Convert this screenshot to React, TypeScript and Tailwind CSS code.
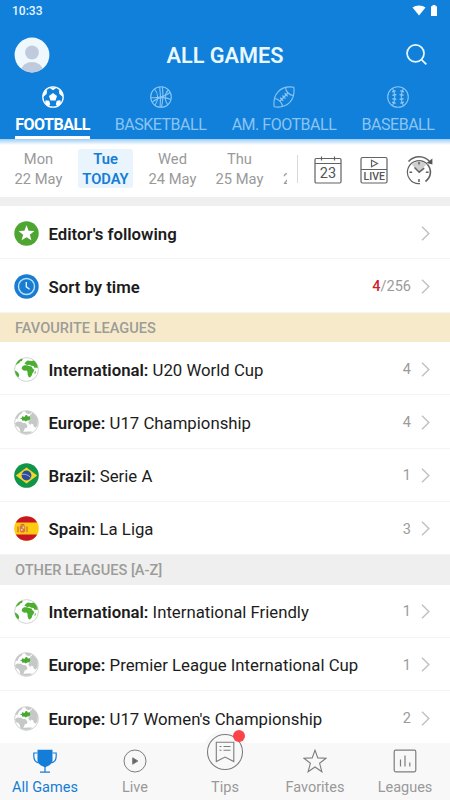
import type { ReactNode } from "react"

type FlagName = "star" | "clock" | "world" | "europe" | "brazil" | "spain"

interface Row {
    flag: FlagName
    bold: string
    text?: string
    count?: string
    live?: string
}

const topRows: Row[] = [
    { flag: "star", bold: "Editor's following" },
    { flag: "clock", bold: "Sort by time", live: "4", count: "/256" },
]

const favouriteRows: Row[] = [
    { flag: "world", bold: "International:", text: "U20 World Cup", count: "4" },
    { flag: "europe", bold: "Europe:", text: "U17 Championship", count: "4" },
    { flag: "brazil", bold: "Brazil:", text: "Serie A", count: "1" },
    { flag: "spain", bold: "Spain:", text: "La Liga", count: "3" },
]

const otherRows: Row[] = [
    { flag: "world", bold: "International:", text: "International Friendly", count: "1" },
    { flag: "europe", bold: "Europe:", text: "Premier League International Cup", count: "1" },
    { flag: "europe", bold: "Europe:", text: "U17 Women's Championship", count: "2" },
]

const days = [
    { day: "Mon", date: "22 May" },
    { day: "Tue", date: "TODAY", active: true },
    { day: "Wed", date: "24 May" },
    { day: "Thu", date: "25 May" },
]

/* ---------- sport icons ---------- */

function SoccerIcon() {
    return (
        <svg viewBox="0 0 22 22" className="size-[22px]" fill="none" stroke="currentColor" strokeWidth="1.3">
            <circle cx="11" cy="11" r="10.2" />
            <g fill="currentColor" stroke="none">
                <path d="M11 7l4 2.900-1.500 4.500h-5L7 9.900z" />
                <path d="M7 1.500h8L11 4.300zM.9 8.600l2.200-4.500 2.100.4-.6 3.500L1.100 11zM21.100 8.600l-2.200-4.500-2.100.4.6 3.500 3.500 3zM3.200 17.500l.3-3.300 3.700.6 1 3.400-1.300 2zM18.800 17.500l-.3-3.300-3.700.6-1 3.400 1.300 2z" />
            </g>
        </svg>
    )
}

function BasketballIcon() {
    return (
        <svg viewBox="0 0 22 22" className="size-[22px]" fill="none" stroke="currentColor" strokeWidth="1.1">
            <circle cx="11" cy="11" r="10.3" />
            <path d="M9.700.8c1 7 1.200 13.500.4 20.400M12.300.8c1 7 .8 13.500-.8 20.400" />
            <path d="M.8 11.500c6 .6 14-.8 19.200-5" />
            <path d="M4.500 3c3.900 4.200 4.200 11 .6 16M18.500 4c-4.500 4-4 10.500-.8 14.800" />
            <path d="M2.500 16c5-4.500 12-5.500 18.300-2.500" />
        </svg>
    )
}

function AmFootballIcon() {
    return (
        <svg viewBox="0 0 22 22" className="size-[22px]" fill="none" stroke="currentColor" strokeWidth="1.1">
            <path d="M20.800 1.200C14 .2 8.500 2 5 5.800 1.700 9.500.3 14.500 1.200 20.800c6.800 1 12.300-.9 15.800-4.600 3.300-3.700 4.700-8.700 3.800-15z" />
            <path d="M12.500 1.200c.3 4.500 3.700 8.200 8.300 8.300M1.200 12.500c4.500.3 8 3.700 8.300 8.300" />
            <path d="M6.800 15.200l8.400-8.400M7.200 11.700l3.100 3.100M9.400 9.500l3.100 3.100M11.600 7.300l3.100 3.100" strokeWidth="1.300" />
        </svg>
    )
}

function BaseballIcon() {
    return (
        <svg viewBox="0 0 22 22" className="size-[22px]" fill="none" stroke="currentColor" strokeWidth="1.1">
            <circle cx="11" cy="11" r="10.3" />
            <path d="M5.500 2.300c3 4.800 3 12.600 0 17.400M16.500 2.300c-3 4.800-3 12.600 0 17.400" />
            <path d="M5 5.900l3.600-1.200M5.400 9.200l4-.6M5.400 12.800l4 .6M5 16.100l3.600 1.200M17 5.900l-3.600-1.200M16.600 9.200l-4-.6M16.600 12.800l-4 .6M17 16.100l-3.600 1.200" strokeWidth="1.500" />
        </svg>
    )
}

const sports = [
    { label: "FOOTBALL", icon: <SoccerIcon />, className: "w-[75px] text-white font-bold", active: true },
    { label: "BASKETBALL", icon: <BasketballIcon />, className: "w-[92px] text-[#8cc5f2]" },
    { label: "AM. FOOTBALL", icon: <AmFootballIcon />, className: "w-[106px] text-[#8cc5f2]" },
    { label: "BASEBALL", icon: <BaseballIcon />, className: "w-[73px] text-[#8cc5f2]" },
]

/* ---------- round row icons ---------- */

function Globe({ europe }: { europe?: boolean }) {
    return (
        <svg viewBox="0 0 25 25" className="size-[25px]">
            <circle cx="12.500" cy="12.500" r="11.900" fill="#fff" stroke="#cccece" strokeWidth=".9" />
            {europe ? (
                <>
                    <g fill="#c6c8c8">
                        <path d="M1.300 8.500C2.500 5 5 2.600 8.300 1.500L8 3.300 5.500 5 4 7.500 3.500 9zM11 1h3.500l3.500 1.200L15.500 4l-3-.5z" />
                        <path d="M1 13l2.500-1.500 3.500.2 2 1.300 2.700.2 1.800 2.500-.5 1.800-2.300 1-1 2.700-1.500 1.800-1.800-1-.7-3-1.500-2.300-2.400-.4z" />
                        <path d="M16 5l2.500-2.200c3 1.800 4.800 4.300 5.400 7.500l-.4 4.700-1.700 2.500-1.800-.6-.8-2.500-1.700-.8-1.200 1.500-2-2 .8-2.300 1.700-1.800z" />
                        <path d="M7 22.300c3.500-1 8-1 11.500-.6-3.600 2.800-8 3-11.500.6z" />
                    </g>
                    <path fill="#47a932" d="M5.800 8.300l1.800-.2.700-1.800 2.200.8 1-1.900 1.600-.3.600 1.500 2.400-.2.500 2.200-1.200 1.900-2.200.1-1.400 1.100-1.500-1.100-2 .3-.4-1.500z" />
                </>
            ) : (
                <g fill="#4bae31">
                    <path d="M2.200 6.600C3.300 4.500 5 2.800 7.300 1.700l1.500.5-1 1.800-1.800.6-.8 1.600-1.500.4-1.200 1.600z" />
                    <path d="M.8 13.400l2 1 1.400 1.400 1 2.200-.7 2.500C2.400 18.800 1 16.300.8 13.400z" />
                    <path d="M10.500 6.800l1.300-2 2-1.200 3.400.3 2.600-.4 2 2 1.500 2.800.4 3-1.700-.8-1.300.4-1.200-1.800-2.300-.4-1.700-.9-2.300.2z" />
                    <path d="M7.700 12l.4-2.200 2-1.500 3-.1 2 .9 2.400.3 1.500 2.700 1.500.7-1.200 2.400-1 1.300-.7 2.300-1.700 1.600-1.300-.3-1.100-3 .1-2-1-1.500-2.600.1z" />
                    <path d="M20.600 15l1-1.200.1 2-1 1.600z" />
                </g>
            )}
        </svg>
    )
}

function RowIcon({ flag }: { flag: FlagName }) {
    if (flag === "world") return <Globe />
    if (flag === "europe") return <Globe europe />
    if (flag === "star") {
        return (
            <svg viewBox="0 0 25 25" className="size-[25px]">
                <circle cx="12.500" cy="12.500" r="12.200" fill="#4fa532" />
                <path fill="#fff" d="M12.500 4.300l2.100 5.400 5.800.3-4.500 3.700 1.500 5.600-4.900-3.100-4.900 3.100 1.500-5.600-4.500-3.700 5.800-.3z" />
            </svg>
        )
    }
    if (flag === "clock") {
        return (
            <svg viewBox="0 0 25 25" className="size-[25px]" fill="none">
                <circle cx="12.500" cy="12.500" r="12.200" fill="#1a7cd0" />
                <circle cx="12.500" cy="12.500" r="8" stroke="#b5e4fb" strokeWidth="1.400" />
                <path d="M12.300 8v4.800l3.300 2.500" stroke="#d9f4ff" strokeWidth="1.400" />
            </svg>
        )
    }
    if (flag === "brazil") {
        return (
            <svg viewBox="0 0 25 25" className="size-[25px]">
                <circle cx="12.500" cy="12.500" r="12.300" fill="#109548" />
                <path fill="#f4d52c" d="M12.500 4.600l10.700 7.900-10.700 7.900-10.700-7.900z" />
                <circle cx="12.500" cy="12.500" r="4.900" fill="#2b4d9b" />
                <path d="M8 11.400c3-.5 6.400.6 8.600 3" stroke="#b9c9dc" strokeWidth=".8" fill="none" />
            </svg>
        )
    }
    return (
        <svg viewBox="0 0 25 25" className="size-[25px]">
            <circle cx="12.500" cy="12.500" r="12.300" fill="#fecb10" />
            <path fill="#c91526" d="M1.800 6.400a12.300 12.300 0 0 1 21.400 0zM1.800 18.600a12.300 12.300 0 0 0 21.400 0z" />
            <path fill="#d9743a" d="M5.800 9.800h5.400v4.700c0 2.700-5.400 2.700-5.400 0z" />
            <path fill="#c96f35" d="M7 8h3l.6 1.400H6.400zM3.400 10.400h1.200v5.800H3.400zM12.400 10.400h1.200v5.800h-1.200z" />
            <path fill="#f0d3bb" d="M8.600 10.600h1.700v1.900H8.600zM6.800 13h1.700v1.700H6.800z" />
        </svg>
    )
}

function Chevron() {
    return (
        <svg viewBox="0 0 9 15" className="h-[15px] w-[9px]" fill="none" stroke="#c2c2c2" strokeWidth="1.500">
            <path d="M1 .8l6.800 6.700L1 14.200" />
        </svg>
    )
}

function LeagueRow({ row }: { row: Row }) {
    return (
        <div className="flex h-[53.250px] shrink-0 items-center border-b border-[#f4f4f4] bg-white pl-3.5 pr-5 pt-[2px]">
            <RowIcon flag={row.flag} />
            <p className="ml-[9.500px] flex-1 whitespace-nowrap pt-0.5 text-[16.750px] text-[#1c1c1c]">
                <span className="font-semibold">{row.bold}</span> {row.text}
            </p>
            <p className="mr-2.5 pt-px text-[14.500px] text-[#9b9b9b]">
                {row.live && <span className="font-medium text-[#cc1f2f]">{row.live}</span>}
                {row.count}
            </p>
            <Chevron />
        </div>
    )
}

function SectionTitle({ title, className }: { title: string; className: string }) {
    return (
        <h2 className={`flex h-[29.500px] shrink-0 items-center pl-[15px] pt-[3px] text-[14.600px] font-medium text-[#9c9c98] ${className}`}>
            {title}
        </h2>
    )
}

/* ---------- date bar tools ---------- */

function CalendarIcon() {
    return (
        <svg viewBox="0 0 28 28" className="size-7" fill="none" stroke="#626262" strokeWidth="1.200">
            <rect x="1" y="2.500" width="26" height="24.500" rx="1.200" />
            <path d="M1 7.500h26M7.500.5v4M20.500.5v4" />
            <text x="14" y="21.800" textAnchor="middle" fontSize="14.500" fill="#555" stroke="none">23</text>
        </svg>
    )
}

function LiveIcon() {
    return (
        <svg viewBox="0 0 28 28" className="size-7" fill="none" stroke="#626262" strokeWidth="1.200">
            <rect x="1" y="1.500" width="26" height="25.500" rx="1.500" />
            <path d="M1 13.500h26M11.500 4.300v6.400l6-3.200z" />
            <text x="14.200" y="24.200" textAnchor="middle" fontSize="10.500" fontWeight="500" fill="#555" stroke="none">LIVE</text>
        </svg>
    )
}

function TimeMachineIcon() {
    return (
        <svg viewBox="0 0 28 30" className="h-[30px] w-7" fill="none" stroke="#626262" strokeWidth="1.200">
            <path d="M13 17.500L6 9.800c3.700-4.300 10.300-4.300 14 0z" fill="#cfcfcf" stroke="none" />
            <path d="M14 28.600A11.500 11.500 0 1 1 21.500 9.500" />
            <path d="M21.500 9.500c4.300 5 4 12.500-2 17" strokeWidth="1.600" />
            <path d="M2.500 6.500C8.500 0 18.500.2 24 7" strokeWidth="1.500" />
            <path d="M26.400 3.500v6l-5.800-1.400z" fill="#555" stroke="none" />
            <path d="M8.500 12.500l4.700 4.700 5-4M13 7v2.500M13 24v3M3.400 17.300h2.800M19.800 17.300h2.800" strokeWidth="1.500" />
        </svg>
    )
}

/* ---------- bottom navigation ---------- */

function NavItem({ label, children, active }: { label: string; children: ReactNode; active?: boolean }) {
    return (
        <div className={`flex w-[90px] flex-col items-center ${active ? "text-[#137dd7]" : "text-[#999]"}`}>
            <div className="flex h-[35px] items-center">{children}</div>
            <span className="pt-px text-[14.500px] leading-[18px]">{label}</span>
        </div>
    )
}

function BottomNav() {
    return (
        <nav className="relative flex h-[57px] shrink-0 bg-[#f8f8f8]">
            <NavItem label="All Games" active>
                <svg viewBox="0 0 24 24" className="size-6" fill="none" stroke="currentColor" strokeWidth="1.200">
                    <path d="M4.500.8h15v10.400c0 3.500-3.500 5.800-7.500 7-4-1.200-7.500-3.500-7.500-7z" fill="currentColor" stroke="none" />
                    <path d="M4.500 4H.8v3c0 4 2 6.300 4.700 6.800M19.500 4h3.700v3c0 4-2 6.300-4.700 6.800M12 17v6M7 23.200h10" />
                </svg>
            </NavItem>
            <NavItem label="Live">
                <svg viewBox="0 0 24 24" className="size-6" fill="none" stroke="#7d7d7d" strokeWidth="1">
                    <circle cx="12" cy="12" r="11" />
                    <path d="M9.700 8.800v6.400l5.200-3.200z" fill="#666" />
                </svg>
            </NavItem>
            <NavItem label="Tips">
                <div className="relative -top-[8.500px] flex size-11 shrink-0 items-center justify-center rounded-full bg-[#f8f8f8]">
                    <svg viewBox="0 0 38 38" className="size-[38px]" fill="none" stroke="#7d7d7d" strokeWidth="1.100">
                        <circle cx="19" cy="19" r="17.500" />
                        <path d="M10.300 9.200h17.500v19.300L19 24l-8.700 4.500z" />
                        <path d="M13.500 13.500h2M17.500 13.500h7M13.500 17.300h2M17.500 17.300h7" />
                    </svg>
                    <span className="absolute right-0.5 top-0 size-3 rounded-full bg-[#fc4349]" />
                </div>
            </NavItem>
            <NavItem label="Favorites">
                <svg viewBox="0 0 24 24" className="size-6" fill="none" stroke="#7d7d7d" strokeWidth="1.100">
                    <path d="M12 1.200l2.800 7.700 8.300.3-6.500 5.100 2.300 8.500-6.900-4.800-6.900 4.800 2.300-8.500L.9 9.200l8.300-.3z" />
                </svg>
            </NavItem>
            <NavItem label="Leagues">
                <svg viewBox="0 0 24 24" className="size-6" fill="none" stroke="#7d7d7d" strokeWidth="1.200">
                    <rect x="1.200" y="1.200" width="21.600" height="21.600" rx="1.500" />
                    <path d="M7.500 10.500v7M12 6.500v11M16.800 13.500v4" />
                </svg>
            </NavItem>
        </nav>
    )
}

export default function App() {
    return (
        <div className="flex h-[800px] w-[450px] flex-col overflow-hidden bg-white font-['Roboto',sans-serif]">
            <header className="h-[138.500px] shrink-0 bg-[#1080db]">
                <div className="flex h-5 items-center justify-between pl-3 pr-[13px] text-xs font-medium text-[#e6f6ff]">
                    <span className="pt-px">10:33</span>
                    <div className="flex items-center gap-[5px]">
                        <svg viewBox="0 0 14 11" className="h-[11px] w-3.5" fill="#fff">
                            <path d="M.5 2.500C4-.3 10-.3 13.500 2.500L7 10.600z" />
                        </svg>
                        <svg viewBox="0 0 6 11" className="h-[11px] w-1.5" fill="#fff">
                            <path d="M0 1.200h1.500V0h3v1.200H6V11H0z" />
                        </svg>
                    </div>
                </div>

                <div className="flex h-[66px] items-center pl-3.5 pr-[23px] pt-1">
                    <svg viewBox="0 0 36 36" className="size-9">
                        <clipPath id="avatar"><circle cx="18" cy="18" r="17.400" /></clipPath>
                        <g clipPath="url(#avatar)">
                            <rect width="36" height="36" fill="#eff8fd" />
                            <circle cx="18" cy="15.500" r="6.900" fill="#bfcbdc" />
                            <ellipse cx="18" cy="33.500" rx="10.800" ry="8.500" fill="#bfcbdc" />
                        </g>
                    </svg>
                    <h1 className="flex-1 pr-[6px] pt-[3px] text-center text-[21.700px] font-semibold text-[#e9f7ff]">ALL GAMES</h1>
                    <svg viewBox="0 0 22 22" className="mb-0.5 size-[21px]" fill="none" stroke="#e9f7ff" strokeWidth="1.800">
                        <circle cx="10" cy="9.800" r="8.900" />
                        <path d="M16 16l5.300 5.300" />
                    </svg>
                </div>

                <div className="flex h-[52.500px] gap-[24.500px] pl-[15px]">
                    {sports.map((sport) => (
                        <div key={sport.label} className={`flex shrink-0 flex-col items-center whitespace-nowrap text-base tracking-[-0.03em] ${sport.className}`}>
                            {sport.icon}
                            <span className="mt-1.5 h-[21.500px] leading-[21px]">{sport.label}</span>
                            {sport.active && <div className="h-[3px] w-full bg-white" />}
                        </div>
                    ))}
                </div>
            </header>

            <div className="flex h-[58.500px] shrink-0 items-center bg-linear-to-b from-[#9dcdf3] to-white to-[6px] pl-[11px] pt-0.5">
                <div className="flex w-[276px] gap-3 overflow-hidden">
                    {days.map((d) => (
                        <div
                            key={d.date}
                            className={`flex h-[39px] w-[55px] shrink-0 flex-col items-center justify-center whitespace-nowrap rounded-[3px] pt-[3px] text-[14.700px] leading-[19.500px] ${d.active ? "bg-[#eaf4fc] font-semibold text-[#137dd7]" : "text-[#999]"}`}
                        >
                            <span>{d.day}</span>
                            <span>{d.date}</span>
                        </div>
                    ))}
                    {/* next day peeks in at the edge of the strip */}
                    <span className="ml-1 w-1 shrink-0 overflow-hidden pt-[21px] text-[14.700px] leading-[19.500px] text-[#999]">2</span>
                </div>
                <div className="ml-[9.500px] h-7 w-px bg-[#d9d9d9]" />
                <div className="ml-4 flex items-center gap-[18px] pt-0.5">
                    <CalendarIcon />
                    <LiveIcon />
                    <TimeMachineIcon />
                </div>
            </div>

            <div className="h-[9px] shrink-0 bg-[#efefef]" />

            <main className="flex h-[537px] shrink-0 flex-col overflow-hidden">
                {topRows.map((row) => <LeagueRow key={row.bold} row={row} />)}
                <SectionTitle title="FAVOURITE LEAGUES" className="bg-[#f7eacb]" />
                {favouriteRows.map((row) => <LeagueRow key={row.text} row={row} />)}
                <SectionTitle title="OTHER LEAGUES [A-Z]" className="bg-[#efefef]" />
                {otherRows.map((row) => <LeagueRow key={row.text} row={row} />)}
            </main>

            <BottomNav />
        </div>
    )
}
